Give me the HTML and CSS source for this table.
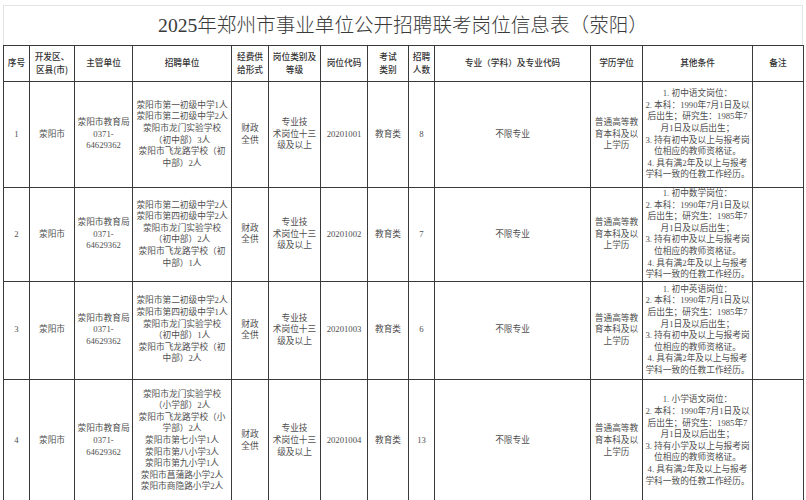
FILE: index.html
```html
<!DOCTYPE html>
<html lang="zh-CN">
<head>
<meta charset="utf-8">
<title>2025年郑州市事业单位公开招聘联考岗位信息表（荥阳）</title>
<link rel="stylesheet" href="styles.css">
</head>
<body>
<div class="sheet">
  <div class="title">2025年郑州市事业单位公开招聘联考岗位信息表（荥阳）</div>
  <table class="grid">
    <colgroup>
      <col class="c1"><col class="c2"><col class="c3"><col class="c4"><col class="c5"><col class="c6"><col class="c7"><col class="c8"><col class="c9"><col class="c10"><col class="c11"><col class="c12"><col class="c13">
    </colgroup>
    <thead>
      <tr class="head">
        <th>序号</th>
        <th>开发区、<br>区县(市)</th>
        <th>主管单位</th>
        <th>招聘单位</th>
        <th>经费供<br>给形式</th>
        <th>岗位类别及<br>等级</th>
        <th>岗位代码</th>
        <th>考试<br>类别</th>
        <th>招聘<br>人数</th>
        <th>专业（学科）及专业代码</th>
        <th>学历学位</th>
        <th>其他条件</th>
        <th>备注</th>
      </tr>
    </thead>
    <tbody>
      <tr class="r1">
        <td>1</td>
        <td>荥阳市</td>
        <td>荥阳市教育局<br>0371-<br>64629362</td>
        <td>荥阳市第一初级中学1人<br>荥阳市第二初级中学2人<br>荥阳市龙门实验学校<br>（初中部）3人<br>荥阳市飞龙路学校（初<br>中部）2人</td>
        <td>财政<br>全供</td>
        <td>专业技<br>术岗位十三<br>级及以上</td>
        <td>20201001</td>
        <td>教育类</td>
        <td>8</td>
        <td>不限专业</td>
        <td>普通高等教<br>育本科及以<br>上学历</td>
        <td>1. 初中语文岗位：<br>2. 本科：1990年7月1日及以<br>后出生；研究生：1985年7<br>月1日及以后出生；<br>3. 持有初中及以上与报考岗<br>位相应的教师资格证。<br>4. 具有满2年及以上与报考<br>学科一致的任教工作经历。</td>
        <td></td>
      </tr>
      <tr class="r2">
        <td>2</td>
        <td>荥阳市</td>
        <td>荥阳市教育局<br>0371-<br>64629362</td>
        <td>荥阳市第二初级中学2人<br>荥阳市第四初级中学2人<br>荥阳市龙门实验学校<br>（初中部）2人<br>荥阳市飞龙路学校（初<br>中部）1人</td>
        <td>财政<br>全供</td>
        <td>专业技<br>术岗位十三<br>级及以上</td>
        <td>20201002</td>
        <td>教育类</td>
        <td>7</td>
        <td>不限专业</td>
        <td>普通高等教<br>育本科及以<br>上学历</td>
        <td>1. 初中数学岗位：<br>2. 本科：1990年7月1日及以<br>后出生；研究生：1985年7<br>月1日及以后出生；<br>3. 持有初中及以上与报考岗<br>位相应的教师资格证。<br>4. 具有满2年及以上与报考<br>学科一致的任教工作经历。</td>
        <td></td>
      </tr>
      <tr class="r3">
        <td>3</td>
        <td>荥阳市</td>
        <td>荥阳市教育局<br>0371-<br>64629362</td>
        <td>荥阳市第二初级中学2人<br>荥阳市第四初级中学1人<br>荥阳市龙门实验学校<br>（初中部）1人<br>荥阳市飞龙路学校（初<br>中部）2人</td>
        <td>财政<br>全供</td>
        <td>专业技<br>术岗位十三<br>级及以上</td>
        <td>20201003</td>
        <td>教育类</td>
        <td>6</td>
        <td>不限专业</td>
        <td>普通高等教<br>育本科及以<br>上学历</td>
        <td>1. 初中英语岗位：<br>2. 本科：1990年7月1日及以<br>后出生；研究生：1985年7<br>月1日及以后出生；<br>3. 持有初中及以上与报考岗<br>位相应的教师资格证。<br>4. 具有满2年及以上与报考<br>学科一致的任教工作经历。</td>
        <td></td>
      </tr>
      <tr class="r4">
        <td>4</td>
        <td>荥阳市</td>
        <td>荥阳市教育局<br>0371-<br>64629362</td>
        <td>荥阳市龙门实验学校<br>（小学部）2人<br>荥阳市飞龙路学校（小<br>学部）2人<br>荥阳市第七小学1人<br>荥阳市第八小学3人<br>荥阳市第九小学1人<br>荥阳市菖蒲路小学2人<br>荥阳市商隐路小学2人</td>
        <td>财政<br>全供</td>
        <td>专业技<br>术岗位十三<br>级及以上</td>
        <td>20201004</td>
        <td>教育类</td>
        <td>13</td>
        <td>不限专业</td>
        <td>普通高等教<br>育本科及以<br>上学历</td>
        <td>1. 小学语文岗位：<br>2. 本科：1990年7月1日及以<br>后出生；研究生：1985年7<br>月1日及以后出生；<br>3. 持有小学及以上与报考岗<br>位相应的教师资格证。<br>4. 具有满2年及以上与报考<br>学科一致的任教工作经历。</td>
        <td></td>
      </tr>
    </tbody>
  </table>
</div>
</body>
</html>
```
FILE: styles.css
```css
html, body {
  margin: 0;
  padding: 0;
  background: #ffffff;
}

.sheet {
  padding: 5px 3px 0 3px;
  width: 800px;
}

.title {
  height: 39px;
  border: 1px solid #e4e4e4;
  border-bottom: none;
  text-align: center;
  font-family: "Liberation Serif", "Noto Sans CJK SC", serif;
  font-size: 19.6px;
  font-weight: 300;
  line-height: 40px;
  color: #3a3a3a;
}

.grid {
  width: 800px;
  border-collapse: collapse;
  table-layout: fixed;
  font-family: "Liberation Serif", "Noto Sans CJK SC", serif;
  font-size: 8.7px;
  line-height: 11.6px;
  color: #4f4f4f;
}

.grid th,
.grid td {
  border: 1px solid #3a3a3a;
  padding: 0 1px;
  text-align: center;
  vertical-align: middle;
  white-space: nowrap;
  overflow: hidden;
}

.grid th {
  font-family: "Noto Sans CJK SC", sans-serif;
  font-weight: 500;
  font-size: 8.7px;
  line-height: 12.5px;
  color: #333333;
}

.c1 { width: 26px; }
.c2 { width: 45px; }
.c3 { width: 58px; }
.c4 { width: 99px; }
.c5 { width: 37px; }
.c6 { width: 52px; }
.c7 { width: 47px; }
.c8 { width: 41px; }
.c9 { width: 26px; }
.c10 { width: 156px; }
.c11 { width: 52px; }
.c12 { width: 110px; }
.c13 { width: 51px; }

.head { height: 36px; }
.r1 { height: 106px; }
.r2 { height: 90px; }
.r3 { height: 98px; }
.r4 { height: 123px; }
```
